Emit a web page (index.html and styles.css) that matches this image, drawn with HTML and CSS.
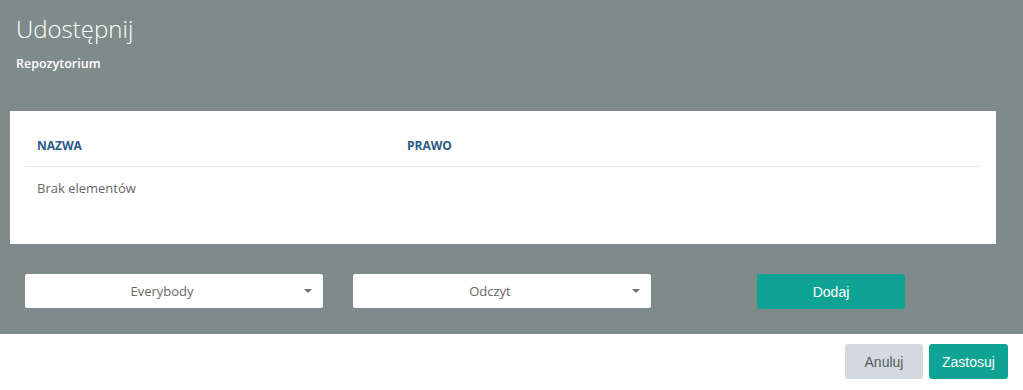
FILE: index.html
```html
<!DOCTYPE html>
<html lang="pl">
<head>
<meta charset="utf-8">
<title>Udostępnij</title>
<link rel="stylesheet" href="styles.css">
</head>
<body>
<div class="dialog">
  <div class="main">
    <header class="head">
      <h1 class="title">Udostępnij</h1>
      <div class="subtitle">Repozytorium</div>
    </header>
    <section class="panel">
      <table class="grid">
        <thead>
          <tr><th class="col-name">NAZWA</th><th>PRAWO</th></tr>
        </thead>
        <tbody>
          <tr><td colspan="2">Brak elementów</td></tr>
        </tbody>
      </table>
    </section>
    <div class="controls">
      <div class="cell">
        <div class="select"><span class="select-text">Everybody</span><span class="caret"></span></div>
      </div>
      <div class="cell">
        <div class="select"><span class="select-text">Odczyt</span><span class="caret"></span></div>
      </div>
      <div class="cell center">
        <button class="btn btn-primary btn-add">Dodaj</button>
      </div>
    </div>
  </div>
  <footer class="footer">
    <button class="btn btn-cancel">Anuluj</button>
    <button class="btn btn-primary btn-apply">Zastosuj</button>
  </footer>
</div>
</body>
</html>
```
FILE: styles.css
```css
* { box-sizing: border-box; }
html, body { margin: 0; padding: 0; }
body {
  width: 1023px;
  height: 390px;
  overflow: hidden;
  font-family: "Open Sans", "DejaVu Sans", sans-serif;
  background: #ffffff;
}
.dialog { display: flex; flex-direction: column; height: 390px; }
.main {
  background: #7f8b8a;
  height: 334px;
  display: flex;
  flex-direction: column;
}
.head { padding: 13px 15px 0 16px; height: 111px; }
.title {
  margin: 0;
  font-size: 24px;
  font-weight: 300;
  color: #ffffff;
  line-height: 32px;
}
.subtitle {
  margin-top: 10px;
  font-size: 12.5px;
  font-weight: 600;
  color: #ffffff;
  line-height: 17px;
}
.panel {
  background: #ffffff;
  margin: 0 27px 0 10px;
  height: 133px;
  padding: 15px 15px 0 15px;
}
.grid { width: 100%; border-collapse: collapse; }
.grid th {
  text-align: left;
  font-size: 12px;
  font-weight: 700;
  color: #2c5a85;
  height: 40px;
  padding: 0 12px;
  border-bottom: 1px solid #e6e9ea;
  vertical-align: middle;
}
.grid th.col-name { width: 370px; }
.grid td {
  font-size: 13px;
  color: #666666;
  padding: 12px 12px;
  line-height: 18px;
}
.controls {
  display: grid;
  grid-template-columns: 328px 328px 330px;
  padding: 30px 0 0 10px;
}
.cell { padding: 0 15px; }
.cell.center { display: flex; justify-content: center; }
.select {
  height: 34px;
  background: #ffffff;
  border-radius: 2px;
  display: flex;
  align-items: center;
  position: relative;
  padding-right: 24px;
}
.select-text {
  flex: 1;
  text-align: center;
  font-size: 13px;
  color: #666666;
}
.caret {
  position: absolute;
  right: 11px;
  top: 15px;
  width: 0; height: 0;
  border-left: 4px solid transparent;
  border-right: 4px solid transparent;
  border-top: 4.5px solid #6a6f74;
}
.btn {
  font-family: "Liberation Sans", Arial, sans-serif;
  font-size: 14px;
  border: none;
  border-radius: 3px;
  cursor: pointer;
  padding: 0;
}
.btn-primary { background: #0fa394; color: #ffffff; }
.btn-add { width: 148px; height: 35px; }
.footer {
  display: flex;
  justify-content: flex-end;
  gap: 6px;
  padding: 10px 15px 0 0;
}
.btn-cancel {
  background: #d3d9de;
  color: #555b61;
  width: 78px;
  height: 35px;
}
.btn-apply { width: 79px; height: 35px; }
```
